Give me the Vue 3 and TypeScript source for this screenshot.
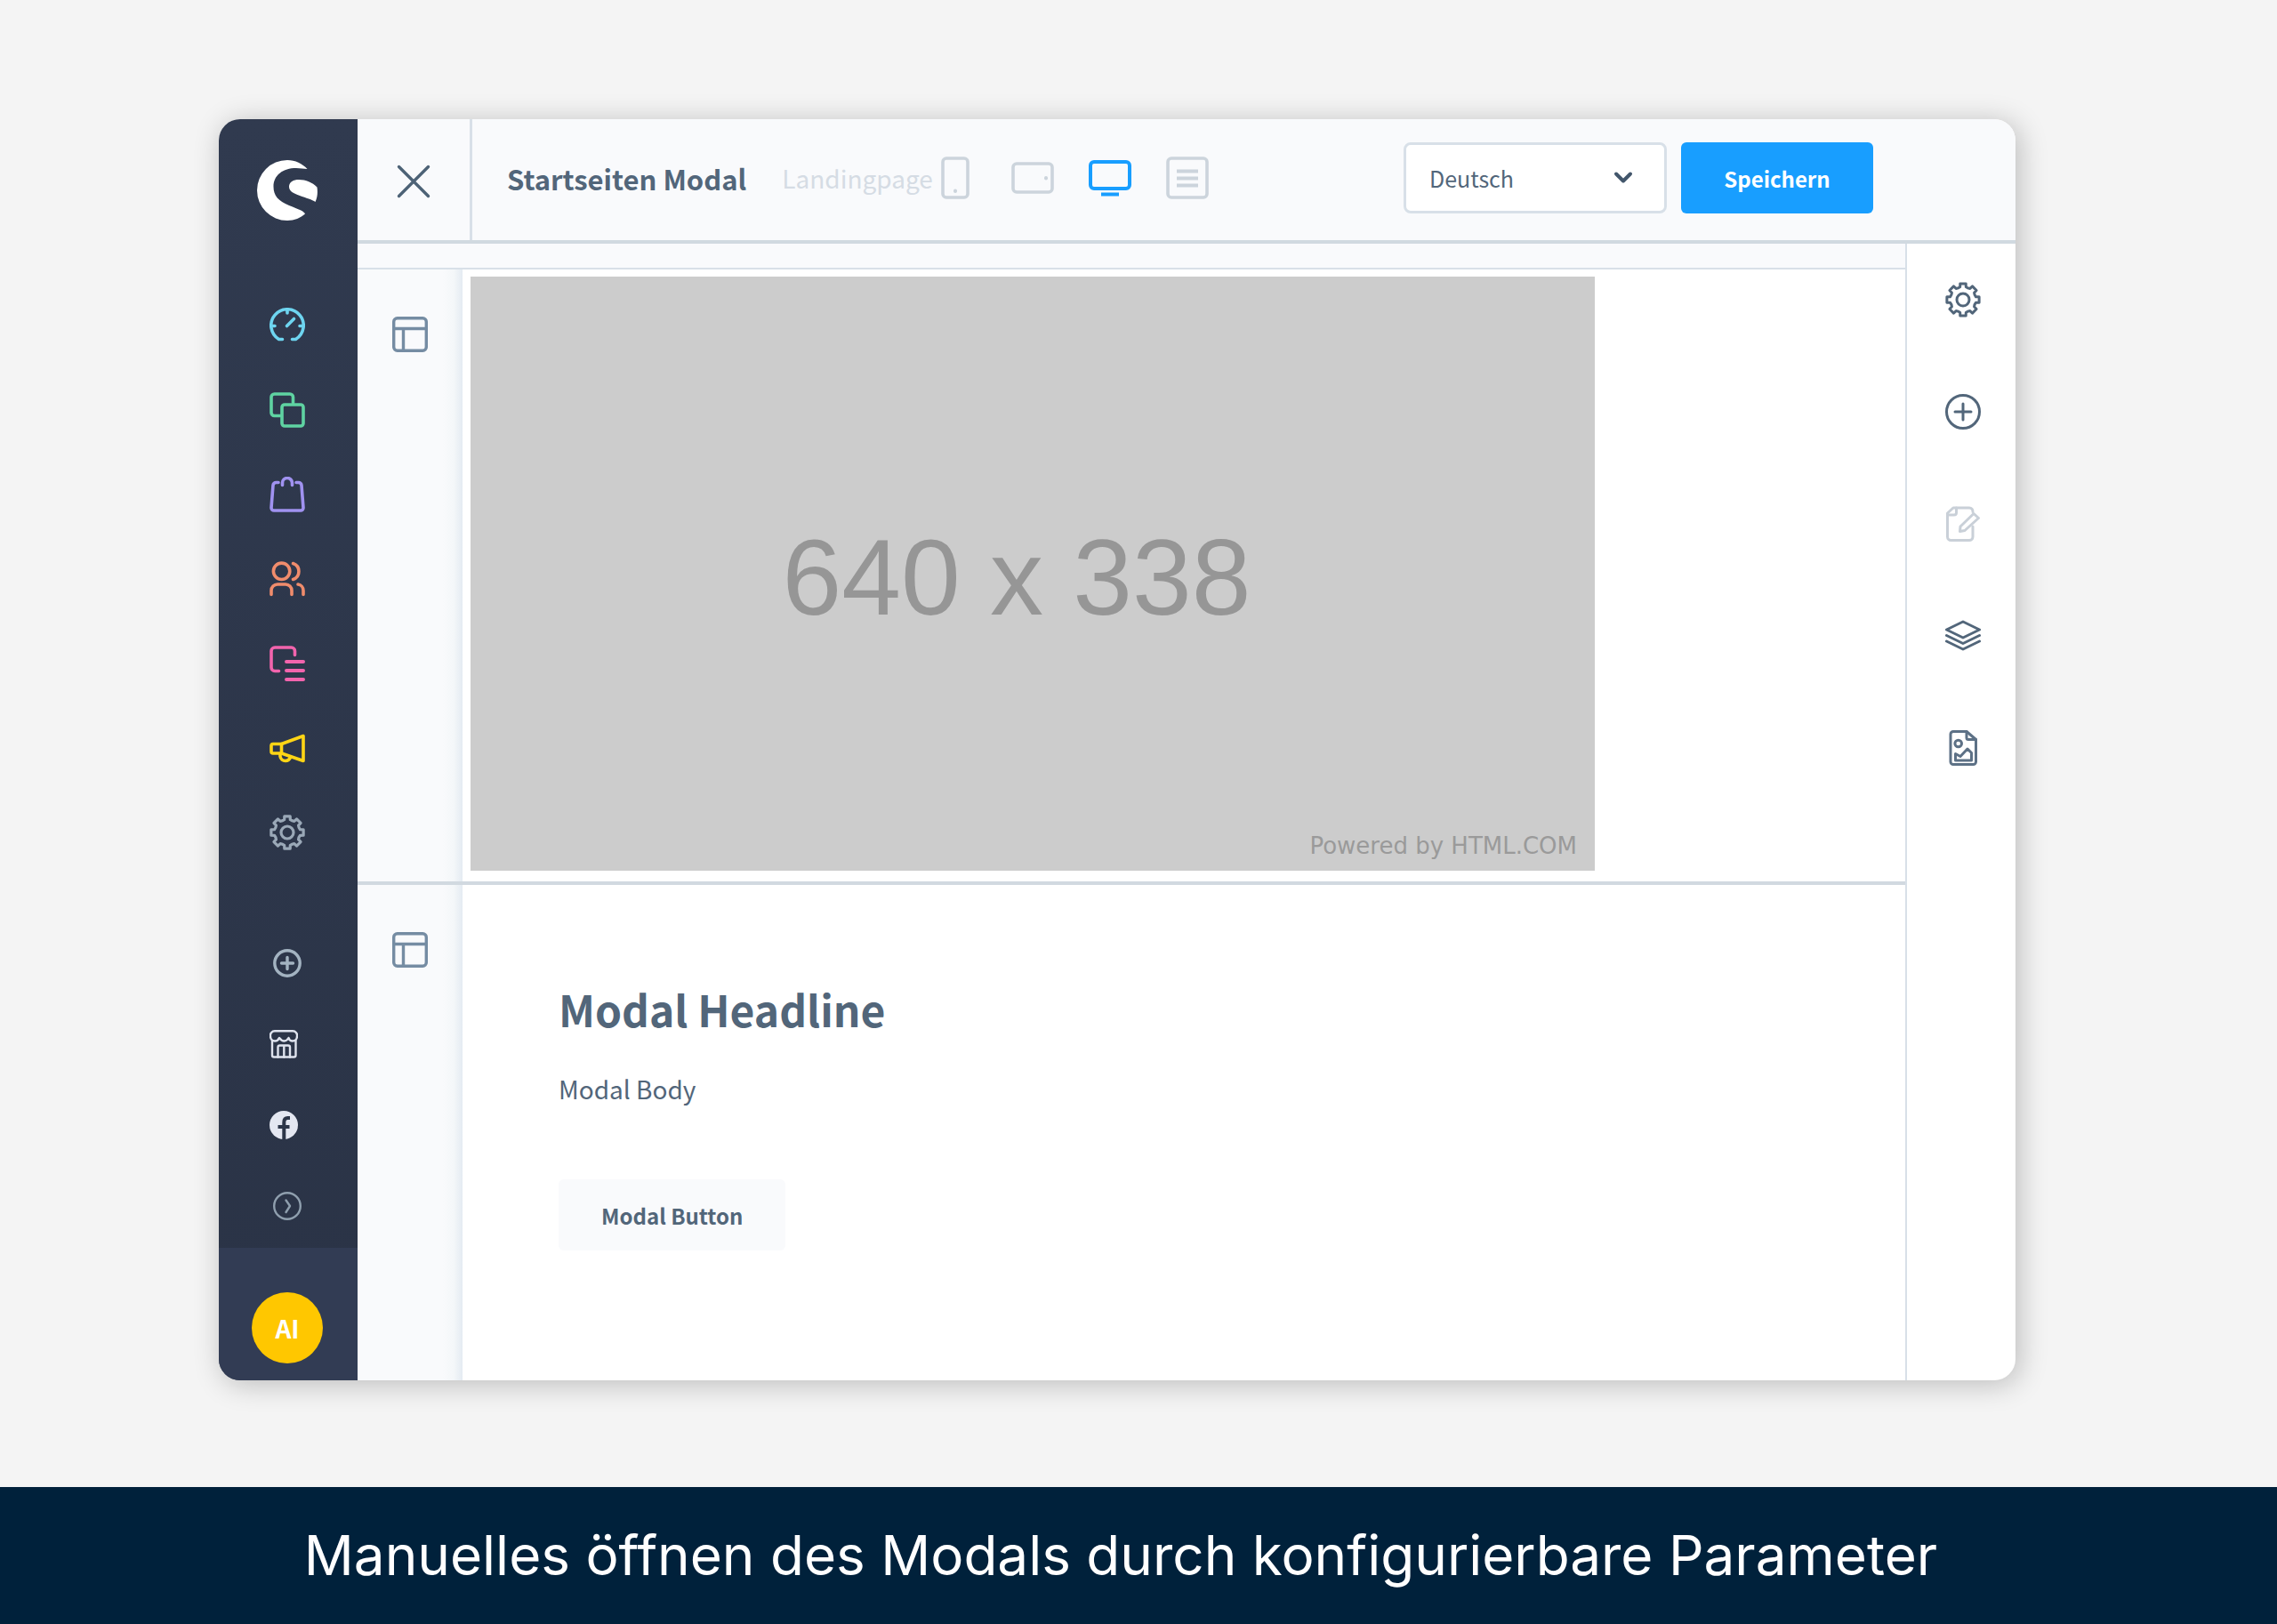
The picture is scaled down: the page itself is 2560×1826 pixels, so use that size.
<script setup lang="ts">
import { ref } from 'vue'

interface Shape {
  d: string
  width?: number
}

interface IconLink {
  label: string
  color: string
  shapes: Shape[]
}

/** Outline of an eight-toothed cog, centred in a 40 × 40 box. */
function cogOutline(): string {
  const outer = 18.4
  const root = 14.8
  const at = (radius: number, degrees: number): string => {
    const angle = ((degrees - 90) * Math.PI) / 180
    return `${(20 + radius * Math.cos(angle)).toFixed(2)} ${(20 + radius * Math.sin(angle)).toFixed(2)}`
  }
  let path = ''
  for (let tooth = 0; tooth < 8; tooth++) {
    const mid = tooth * 45
    path += `${tooth === 0 ? 'M' : 'L'}${at(root, mid - 13)}L${at(outer, mid - 10)}`
    path += `L${at(outer, mid + 10)}L${at(root, mid + 13)}`
    path += `Q${at(13.8, mid + 22.5)} ${at(root, mid + 32)}`
  }
  return path + 'Z'
}

const cog: Shape[] = [
  { d: cogOutline(), width: 3.2 },
  { d: 'M27 20a7 7 0 1 1-14 0a7 7 0 1 1 14 0z', width: 3.2 },
]

const mainLinks: IconLink[] = [
  {
    label: 'Dashboard',
    color: '#6ed5f0',
    shapes: [
      { d: 'M14.5 35.5H10.5A18.2 18.2 0 1 1 29.5 35.5H25.5' },
      { d: 'M20 2v4M2 20.5h4M34 20.5h4' },
      { d: 'M19.5 20.5l8-8' },
    ],
  },
  {
    label: 'Kataloge',
    color: '#5fd3a2',
    shapes: [
      { d: 'M12 26.5H5.5A3.5 3.5 0 0 1 2 23V5.5A3.5 3.5 0 0 1 5.5 2H23A3.5 3.5 0 0 1 26.5 5.5V12' },
      { d: 'M17 14H35a3 3 0 0 1 3 3V35a3 3 0 0 1-3 3H17a3 3 0 0 1-3-3V17a3 3 0 0 1 3-3z' },
    ],
  },
  {
    label: 'Bestellungen',
    color: '#a092f0',
    shapes: [
      { d: 'M10 6.5H7.5A3.5 3.5 0 0 0 4 9.7L2 35a3 3 0 0 0 3 3H35a3 3 0 0 0 3-3L36 9.7A3.5 3.5 0 0 0 32.5 6.5H30' },
      { d: 'M14.5 9.5V7a5.5 5.5 0 0 1 11 0V9.5' },
    ],
  },
  {
    label: 'Kunden',
    color: '#f08c6c',
    shapes: [
      { d: 'M22.8 11.3a9.2 9.2 0 1 1-18.4 0a9.2 9.2 0 1 1 18.4 0z' },
      { d: 'M26.5 2.5a9.5 9.5 0 0 1 0 18' },
      { d: 'M2 37.5V33a7 7 0 0 1 7-7H18a7 7 0 0 1 7 7V37.5' },
      { d: 'M32 26a7 7 0 0 1 6 7V37.5' },
    ],
  },
  {
    label: 'Inhalte',
    color: '#f264ad',
    shapes: [
      { d: 'M10.5 28.5H6a4 4 0 0 1-4-4V6a4 4 0 0 1 4-4H24.5a4 4 0 0 1 4 4V10.5' },
      { d: 'M19 18H38M19 28H38M19 38H38', width: 4 },
    ],
  },
  {
    label: 'Marketing',
    color: '#ffd515',
    shapes: [
      { d: 'M13.5 15.5H4a2 2 0 0 0-2 2V24a2 2 0 0 0 2 2H13.5z' },
      { d: 'M13.5 15.5L38 6.5V34.5L13.5 26' },
      { d: 'M12 26.5v3a6 6 0 0 0 6 5c3 0 4.5-1.5 5.5-4' },
    ],
  },
  { label: 'Einstellungen', color: '#9aa8b7', shapes: cog },
]

const toolLinks: IconLink[] = [
  { label: 'Seiteneinstellungen', color: '#52667a', shapes: cog },
  {
    label: 'Blöcke',
    color: '#52667a',
    shapes: [
      { d: 'M38.5 20a18.5 18.5 0 1 1-37 0a18.5 18.5 0 1 1 37 0z' },
      { d: 'M20 11V29M11 20H29' },
    ],
  },
  {
    label: 'Bearbeiten',
    color: '#c9d0d8',
    shapes: [
      { d: 'M31 6.5A4 4 0 0 0 27 2H9L2.5 8V34.5a4 4 0 0 0 4 4H27a4 4 0 0 0 4-4V23' },
      { d: 'M12.5 2V7.5a2.5 2.5 0 0 1-2.5 2.5H2.5' },
      { d: 'M32 8.5L37.5 13.5L22 27.5L16.5 28.5L17 23z' },
    ],
  },
  {
    label: 'Navigator',
    color: '#52667a',
    shapes: [
      { d: 'M20 4L38.5 13L20 22L1.5 13z' },
      { d: 'M1.5 19.5L20 28.5L38.5 19.5' },
      { d: 'M1.5 26L20 35L38.5 26' },
    ],
  },
  {
    label: 'Layout',
    color: '#5d7186',
    shapes: [
      { d: 'M24 1.5H9a3 3 0 0 0-3 3V35.5a3 3 0 0 0 3 3H31.5a3 3 0 0 0 3-3V10.5z' },
      { d: 'M24 1.5V8.5a2 2 0 0 0 2 2H34.5' },
      { d: 'M18.5 15a3.8 3.8 0 1 1-7.6 0a3.8 3.8 0 1 1 7.6 0z' },
      { d: 'M11.5 34V26.5L17 29.5L25 21L29.5 25.5V34z' },
    ],
  },
]

const devices = [
  { id: 'phone', label: 'Smartphone' },
  { id: 'tablet', label: 'Tablet' },
  { id: 'desktop', label: 'Desktop' },
  { id: 'form', label: 'Formular' },
]

const language = ref('Deutsch')
const device = ref('desktop')
</script>

<template>
  <div class="page">
    <main class="stage">
      <div class="window">
        <nav class="menu" aria-label="Hauptmenü">
          <a class="logo" href="#" aria-label="Start">
            <svg viewBox="0 0 68 68" width="68" height="68" fill="#fff">
              <path d="M56.5 10C51 4 43 0 34 0A34 34 0 0 0 34 68C42 68 49 65 54 60.5C53 57.5 47 55.5 36 51C24 46 18.5 40 18.5 30C18.5 17 29 9 44 9C49 9 52 10 56.5 10z" />
              <path d="M36 30C36 24.5 41 22 47 22C55 22 62 25 67.5 30.5C68.3 36 68 42 65.5 47C62 44.5 55 42.5 48 40C41 37.5 36 35 36 30z" />
            </svg>
          </a>

          <div class="menu-main">
            <a v-for="link in mainLinks" :key="link.label" href="#" :aria-label="link.label">
              <svg viewBox="0 0 40 40" width="40" height="40" class="line" :stroke="link.color">
                <path v-for="shape in link.shapes" :key="shape.d" :d="shape.d" :stroke-width="shape.width ?? 3.6" />
              </svg>
            </a>
          </div>

          <div class="menu-extra">
            <a href="#" aria-label="Erweiterung hinzufügen">
              <svg viewBox="0 0 32 32" width="32" height="32" class="line" stroke="#a3b3c1" stroke-width="3.4">
                <circle cx="16" cy="16" r="14.2" />
                <path d="M16 9.5V22.5M9.5 16H22.5" />
              </svg>
            </a>
            <a href="#" class="shifted" aria-label="Shop">
              <svg viewBox="0 0 32 32" width="32" height="32" class="line" stroke="#dfe3ee" stroke-width="2.4">
                <path d="M6 1.2H26A5 5 0 0 1 31 7C31 10 29 12.5 26 12.5C23.5 12.5 22 11 21.5 9C20 11.5 19 12.5 16.5 12.5C14 12.5 12.5 11 11 9C10 11.5 8.5 12.5 6 12.5C3 12.5 1 10 1 7A5 5 0 0 1 6 1.2z" />
                <path d="M3 12V28.5a2 2 0 0 0 2 2H27.5a2 2 0 0 0 2-2V12" />
                <path d="M9.5 30.5V19.5a2 2 0 0 1 2-2H21a2 2 0 0 1 2 2V30.5M16.3 18V30.5" />
              </svg>
            </a>
            <a href="#" class="shifted" aria-label="Facebook">
              <svg viewBox="0 0 32 32" width="32" height="32" fill="none" stroke="#2c3548">
                <circle cx="16" cy="16" r="16" fill="#e4e7f1" stroke="none" />
                <path d="M16.3 32V13C16.3 9.5 18 8 20.5 8H23" stroke-width="4" />
                <path d="M9.5 18H22.5" stroke-width="4" />
              </svg>
            </a>
            <a href="#" aria-label="Menü ausklappen">
              <svg viewBox="0 0 32 32" width="32" height="32" class="line" stroke="#8f9fae" stroke-width="2.4">
                <circle cx="16" cy="16" r="14.8" />
                <path d="M14.5 9.5L19 16L14.5 23" />
              </svg>
            </a>
          </div>

          <div class="user">
            <button type="button" class="avatar">AI</button>
          </div>
        </nav>

        <div class="editor">
          <header class="toolbar">
            <button type="button" class="close" aria-label="Schließen">
              <svg viewBox="0 0 38 38" width="38" height="38" class="line" stroke="#4d6276" stroke-width="3.4">
                <path d="M2.5 2.5L35.5 35.5M35.5 2.5L2.5 35.5" />
              </svg>
            </button>
            <div class="heading">
              <h1>Startseiten Modal</h1>
              <span>Landingpage</span>
            </div>
            <div class="devices">
              <button
                v-for="item in devices"
                :key="item.id"
                type="button"
                :class="{ active: item.id === device }"
                :aria-label="item.label"
                @click="device = item.id"
              >
                <svg viewBox="0 0 48 48" width="48" height="48" class="line" stroke="currentColor" stroke-width="3.6">
                  <template v-if="item.id === 'phone'">
                    <rect x="10" y="2" width="28" height="44" rx="4" />
                    <path d="M24 38.5v.5" stroke-width="4" />
                  </template>
                  <template v-else-if="item.id === 'tablet'">
                    <rect x="2" y="8" width="44" height="32" rx="4" />
                    <path d="M39 24v.5" stroke-width="4" />
                  </template>
                  <template v-else-if="item.id === 'desktop'">
                    <rect x="2" y="6" width="44" height="30" rx="4" stroke-width="4" />
                    <path d="M14 42.5H34" stroke-width="4" stroke-linecap="butt" />
                  </template>
                  <template v-else>
                    <rect x="2" y="2" width="44" height="44" rx="4" />
                    <path d="M12 16.5H36M12 24.5H36M12 32.5H36" stroke-width="4" stroke-linecap="butt" />
                  </template>
                </svg>
              </button>
            </div>
            <div class="actions">
              <div class="language">
                <select v-model="language" aria-label="Sprache">
                  <option>Deutsch</option>
                  <option>English</option>
                </select>
                <svg viewBox="0 0 22 16" width="22" height="16" class="line" stroke="#42566b" stroke-width="4">
                  <path d="M3 3.5L11 11.5L19 3.5" />
                </svg>
              </div>
              <button type="button" class="save">Speichern</button>
            </div>
          </header>

          <div class="workspace">
            <div class="canvas">
              <div class="band"></div>

              <section class="block">
                <div class="grip">
                  <svg viewBox="0 0 40 40" width="40" height="40" class="line" stroke="#758ca3" stroke-width="3.4">
                    <rect x="1.7" y="1.7" width="36.6" height="36.6" rx="4" />
                    <path d="M1.7 13.5H38.3M12.5 13.5V38.3" />
                  </svg>
                </div>
                <div class="media">
                  <div class="placeholder">
                    <span class="dimensions">640 x 338</span>
                    <span class="credit">Powered by HTML.COM</span>
                  </div>
                </div>
              </section>

              <section class="block">
                <div class="grip">
                  <svg viewBox="0 0 40 40" width="40" height="40" class="line" stroke="#758ca3" stroke-width="3.4">
                    <rect x="1.7" y="1.7" width="36.6" height="36.6" rx="4" />
                    <path d="M1.7 13.5H38.3M12.5 13.5V38.3" />
                  </svg>
                </div>
                <div class="copy">
                  <h2>Modal Headline</h2>
                  <p>Modal Body</p>
                  <button type="button">Modal Button</button>
                </div>
              </section>
            </div>

            <aside class="tools">
              <a v-for="link in toolLinks" :key="link.label" href="#" :aria-label="link.label">
                <svg viewBox="0 0 40 40" width="40" height="40" class="line" :stroke="link.color" stroke-width="3">
                  <path v-for="shape in link.shapes" :key="shape.d" :d="shape.d" />
                </svg>
              </a>
            </aside>
          </div>
        </div>
      </div>
    </main>

    <footer class="caption">Manuelles öffnen des Modals durch konfigurierbare Parameter</footer>
  </div>
</template>

<style>
body {
  margin: 0;
  background: #f4f4f4;
}
</style>

<style scoped>
.page {
  display: flex;
  flex-direction: column;
  min-height: 100vh;
  font-family: "Noto Sans CJK SC", "Noto Sans", sans-serif;
  color: #52667a;
}

.page * {
  box-sizing: border-box;
}

button {
  padding: 0;
  border: 0;
  background: none;
  font: inherit;
  color: inherit;
  cursor: pointer;
}

svg {
  display: block;
}

.line {
  fill: none;
  stroke-linecap: round;
  stroke-linejoin: round;
}

.stage {
  flex: 1;
  padding: 134px 294px 120px 246px;
}

.window {
  display: flex;
  overflow: hidden;
  border-radius: 24px;
  background: #fff;
  box-shadow: 4px 4px 32px rgba(0, 0, 0, 0.24);
}

.menu {
  display: flex;
  flex: none;
  flex-direction: column;
  width: 156px;
  background: linear-gradient(#303a4f, #2a3346);
}

.logo {
  padding: 46px 0 0 43px;
}

.menu-main {
  margin-top: 70px;
}

.menu-main a,
.menu-extra a {
  display: flex;
  align-items: center;
  justify-content: center;
  height: 95px;
  padding-right: 2px;
}

.menu-extra {
  margin: 54px 0 2px;
}

.menu-extra a {
  height: 91px;
}

.menu-extra .shifted {
  padding-right: 10px;
}

.user {
  display: flex;
  justify-content: center;
  padding: 50px 2px 19px 0;
  margin-top: auto;
  background: #323c54;
}

.avatar {
  width: 80px;
  height: 80px;
  border-radius: 50%;
  background: #ffc700;
  color: #fff;
  font-size: 28px;
  font-weight: 600;
  line-height: 78px;
}

.editor {
  display: flex;
  flex: 1;
  flex-direction: column;
  min-width: 0;
}

.toolbar {
  display: flex;
  align-items: stretch;
  height: 140px;
  border-bottom: 4px solid #d1d9e0;
  background: #f9fafc;
}

.close {
  display: flex;
  align-items: center;
  justify-content: center;
  width: 129px;
  padding-top: 4px;
  border-right: 3px solid #d8e0e8;
}

.heading {
  display: flex;
  flex: none;
  align-items: center;
  gap: 40px;
  width: 519px;
  padding: 0 0 4px 39px;
  white-space: nowrap;
}

.heading h1 {
  margin: 0;
  font-size: 31px;
  font-weight: 600;
}

.heading span {
  color: #d5dce4;
  font-size: 28px;
}

.devices {
  display: flex;
  align-items: center;
  gap: 39px;
  padding-bottom: 4px;
  color: #ccd4dc;
}

.devices .active {
  color: #189eff;
}

.actions {
  display: flex;
  align-items: center;
  gap: 16px;
  margin-left: auto;
  padding: 0 160px 4px 0;
}

.language {
  position: relative;
}

.language select {
  display: block;
  width: 296px;
  height: 80px;
  padding: 0 26px;
  border: 3px solid #d8e0e8;
  border-radius: 8px;
  appearance: none;
  background: #fff;
  color: #52667a;
  font: inherit;
  font-size: 25px;
}

.language svg {
  position: absolute;
  top: 32px;
  right: 38px;
  pointer-events: none;
}

.save {
  width: 216px;
  height: 80px;
  border-radius: 6px;
  background: #189eff;
  color: #fff;
  font-size: 24px;
  font-weight: 600;
}

.workspace {
  display: flex;
  flex: 1;
}

.canvas {
  display: flex;
  flex: 1;
  flex-direction: column;
  min-width: 0;
}

.band {
  height: 29px;
  border-bottom: 2px solid #d8e0e8;
  background: #f9fafc;
}

.block {
  display: flex;
}

.block + .block {
  flex: 1;
  border-top: 4px solid #d1d9e0;
}

.grip {
  flex: none;
  width: 118px;
  padding: 53px 0 0 39px;
  background: linear-gradient(to left, #e4ebf2, #f4f7f9 10px, #f9fafc 22px);
}

.media {
  flex: 1;
  padding: 8px 9px 12px;
}

.placeholder {
  display: flex;
  flex-direction: column;
  width: 100%;
  max-width: 1264px;
  height: 668px;
  padding: 256px 20px 12px;
  background: #ccc;
  color: #969696;
}

.dimensions {
  padding-right: 36px;
  font-family: "Liberation Sans", sans-serif;
  font-size: 120px;
  line-height: 164px;
  text-align: center;
}

.credit {
  margin-top: auto;
  color: #9a9a9a;
  font-family: "DejaVu Sans", sans-serif;
  font-size: 26px;
  line-height: 32px;
  text-align: right;
}

.copy {
  display: flex;
  flex-direction: column;
  align-items: flex-start;
  padding: 103px 108px 0;
}

.copy h2 {
  margin: 0;
  font-size: 48px;
  font-weight: 600;
  line-height: 72px;
}

.copy p {
  margin: 34px 0 0;
  font-size: 28px;
  line-height: 40px;
}

.copy button {
  height: 80px;
  padding: 0 48px;
  margin-top: 82px;
  border-radius: 6px;
  background: #f9fafc;
  font-size: 24px;
  font-weight: 600;
}

.tools {
  flex: none;
  width: 124px;
  border-left: 2px solid #d8e0e8;
}

.tools a {
  display: flex;
  align-items: center;
  justify-content: center;
  height: 126px;
  padding-left: 4px;
}

.caption {
  padding: 0 40px 0 0;
  background: #00213b;
  color: #fff;
  font-family: Inter, sans-serif;
  font-size: 62px;
  line-height: 154px;
  text-align: center;
}
</style>
